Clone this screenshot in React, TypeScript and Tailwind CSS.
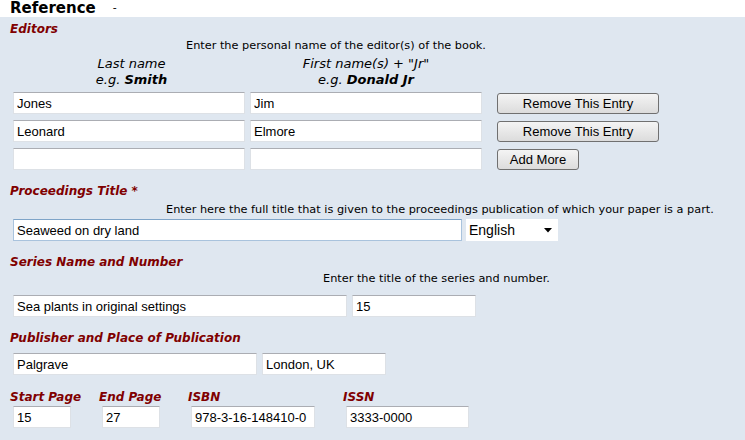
import React from "react";

const label = "font-['DejaVu_Sans',Verdana,sans-serif] text-[12px] font-bold italic text-[#800000] leading-[16px]";
const hint = "font-['DejaVu_Sans',Verdana,sans-serif] text-[11.3px] text-black leading-[14px]";
const field =
  "block h-[22px] bg-white border border-[#dde1e6] border-t-[#abadb3] px-[3px] font-['Liberation_Sans',Arial,sans-serif] text-[13px] text-black outline-none";

function Field({ value, w }: { value: string; w: string }) {
  return <input readOnly value={value} className={`${field} ${w}`} />;
}

function Btn({ children, w }: { children: React.ReactNode; w: string }) {
  return (
    <button className={`block h-[21px] ${w} rounded-[3px] border border-[#707070] bg-gradient-to-b from-[#f4f4f4] to-[#dcdcdc] font-['Liberation_Sans',Arial,sans-serif] text-[13px] leading-[19px] text-black`}>
      {children}
    </button>
  );
}

export default function App() {
  const editors = [
    { last: "Jones", first: "Jim", remove: true },
    { last: "Leonard", first: "Elmore", remove: true },
    { last: "", first: "", remove: false },
  ];

  return (
    <div className="w-[745px] h-[440px] overflow-hidden bg-[#dfe7f0]">
      {/* header */}
      <div className="h-[17px] bg-white flex items-center pl-[10px] font-['DejaVu_Sans',Verdana,sans-serif] text-black">
        <span className="text-[15px] font-bold leading-[17px]">Reference</span>
        <span className="ml-[17px] text-[11px]">-</span>
      </div>

      <div className="pl-[10px]">
        {/* Editors */}
        <div className={`${label} text-[12.5px] mt-[4px]`}>Editors</div>
        <div className="w-[652px]">
          <div className={`${hint} text-center mt-[2px]`}>Enter the personal name of the editor(s) of the book.</div>
          <div className="flex mt-[3px] ml-[3px]">
            <div className="w-[237px] text-center font-['DejaVu_Sans',Verdana,sans-serif] text-[13px] leading-[16px] italic">
              <div>Last name</div>
              <div>
                e.g. <b>Smith</b>
              </div>
            </div>
            <div className="w-[232px] text-center font-['DejaVu_Sans',Verdana,sans-serif] text-[13px] leading-[16px] italic">
              <div>First name(s) + "Jr"</div>
              <div>
                e.g. <b>Donald Jr</b>
              </div>
            </div>
          </div>
        </div>
        <div className="flex flex-col gap-[6px] mt-[4px] ml-[3px]">
          {editors.map((e, i) => (
            <div key={i} className="flex items-center h-[22px]">
              <Field value={e.last} w="w-[232px]" />
              <Field value={e.first} w="w-[232px] ml-[5px]" />
              <div className="ml-[15px] flex">
                {e.remove ? <Btn w="w-[162px]">Remove This Entry</Btn> : <Btn w="w-[82px]">Add More</Btn>}
              </div>
            </div>
          ))}
        </div>

        {/* Proceedings */}
        <div className={`${label} mt-[13px]`}>Proceedings Title *</div>
        <div className={`${hint} pl-[156px] mt-[4px]`}>
          Enter here the full title that is given to the proceedings publication of which your paper is a part.
        </div>
        <div className="flex items-center mt-[2px] ml-[3px]">
          <input
            readOnly
            value="Seaweed on dry land"
            className="block h-[22px] w-[449px] bg-white border border-[#a9c3dd] border-t-[#7ea4c8] px-[3px] font-['Liberation_Sans',Arial,sans-serif] text-[13px] text-black outline-none"
          />
          <div className="ml-[4px] h-[22px] w-[92px] bg-white flex items-center justify-between pl-[3px] pr-[6px] font-['Liberation_Sans',Arial,sans-serif] text-[14px]">
            <span>English</span>
            <svg width="8" height="5" viewBox="0 0 8 5">
              <path d="M0 0h8L4 4.5z" fill="#000" />
            </svg>
          </div>
        </div>

        {/* Series */}
        <div className={`${label} mt-[13px]`}>Series Name and Number</div>
        <div className={`${hint} pl-[313px] mt-[2px]`}>Enter the title of the series and number.</div>
        <div className="flex mt-[9px] ml-[3px]">
          <Field value="Sea plants in original settings" w="w-[334px]" />
          <Field value="15" w="w-[124px] ml-[5px]" />
        </div>

        {/* Publisher */}
        <div className={`${label} mt-[13px]`}>Publisher and Place of Publication</div>
        <div className="flex mt-[7px] ml-[3px]">
          <Field value="Palgrave" w="w-[244px]" />
          <Field value="London, UK" w="w-[124px] ml-[5px]" />
        </div>

        {/* Pages / ISBN / ISSN */}
        <div className="flex mt-[14px]">
          {[
            { l: "Start Page", v: "15", col: "w-[89px]", w: "w-[58px]" },
            { l: "End Page", v: "27", col: "w-[89px]", w: "w-[58px]" },
            { l: "ISBN", v: "978-3-16-148410-0", col: "w-[155px]", w: "w-[124px]" },
            { l: "ISSN", v: "3333-0000", col: "w-[160px]", w: "w-[123px]" },
          ].map((c) => (
            <div key={c.l} className={`${c.col} flex flex-col`}>
              <div className={`${label} text-[11.6px]`}>{c.l}</div>
              <Field value={c.v} w={`${c.w} ml-[3px] mt-[1px]`} />
            </div>
          ))}
        </div>
      </div>
    </div>
  );
}
